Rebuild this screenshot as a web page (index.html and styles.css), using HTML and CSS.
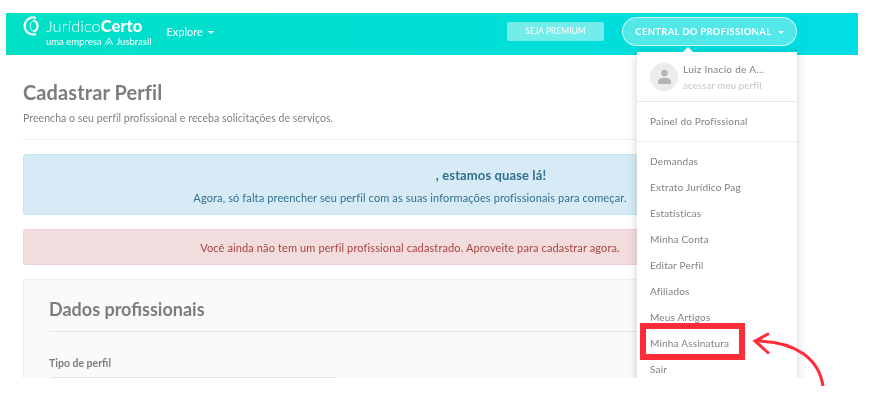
FILE: index.html
```html
<!DOCTYPE html>
<html lang="en">
<head>
    <meta charset="UTF-8">
    <meta name="viewport" content="width=device-width, initial-scale=1.0">
    <title>Cadastrar Perfil</title>
    <link rel="stylesheet" href="styles.css">
</head>
<body>
    <div class="app">
        <header class="topbar">
            <div class="brand">
                <svg class="brand-icon" width="19" height="20" viewBox="0 0 19 20">
                    <path d="M13 2A8.500 8.500 0 1 0 13 18" fill="none" stroke="#fff" stroke-width="2.200"/>
                    <path d="M10 4.500a5.600 5.600 0 0 1 0 11" fill="none" stroke="#fff" stroke-width="2.200"/>
                    <path d="M10 4.500a7 7 0 0 0 0 11" fill="none" stroke="#fff" stroke-width="0.800"/>
                </svg>
                <div class="brand-text">
                    <div class="brand-name">Jurídico<b>Certo</b></div>
                    <div class="brand-sub">uma empresa
                        <svg width="10" height="8" viewBox="0 0 10 8"><path d="M1 7.500 5 1l4 6.500M3 7.500 5 4.500l2 3" fill="none" stroke="#fff" stroke-width="0.900"/></svg>
                        Jusbrasil</div>
                </div>
            </div>
            <a class="explore" href="#">Explore <span class="caret"></span></a>
            <a class="premium" href="#">SEJA PREMIUM</a>
            <a class="central" href="#">CENTRAL DO PROFISSIONAL <span class="caret"></span></a>
        </header>

        <main class="content">
            <h1>Cadastrar Perfil</h1>
            <p class="lead">Preencha o seu perfil profissional e receba solicitações de serviços.</p>
            <hr class="rule">
            <div class="alert alert-info">
                <h4>, estamos quase lá!</h4>
                <p>Agora, só falta preencher seu perfil com as suas informações profissionais para começar.</p>
            </div>
            <div class="alert alert-danger">
                <p>Você ainda não tem um perfil profissional cadastrado. Aproveite para cadastrar agora.</p>
            </div>
            <section class="card">
                <h2>Dados profissionais</h2>
                <label class="field-label">Tipo de perfil</label>
                <div class="field"></div>
            </section>
        </main>

        <nav class="dropdown">
            <div class="profile">
                <span class="avatar">
                    <svg width="15" height="15" viewBox="0 0 15 15"><circle cx="7.500" cy="4" r="3.200" fill="#b5b5b5"/><path d="M1 15v-2.500C1 10 4.500 8.800 7.500 8.800S14 10 14 12.500V15z" fill="#b5b5b5"/></svg>
                </span>
                <div>
                    <div class="profile-name">Luiz Inacio de A...</div>
                    <div class="profile-link">acessar meu perfil</div>
                </div>
            </div>
            <a class="panel-link" href="#">Painel do Profissional</a>
            <ul class="menu">
                <li>Demandas</li>
                <li>Extrato Jurídico Pag</li>
                <li>Estatísticas</li>
                <li>Minha Conta</li>
                <li>Editar Perfil</li>
                <li>Afiliados</li>
                <li>Meus Artigos</li>
                <li>Minha Assinatura</li>
                <li>Sair</li>
            </ul>
        </nav>
    </div>

    <div class="highlight"></div>
    <svg class="pointer" width="80" height="60" viewBox="0 0 80 60">
        <path d="M72 56C68 30 46 11 5 11" fill="none" stroke="#ff2d3a" stroke-width="3"/>
        <path d="M18 3.500 4 11l14 12.500" fill="none" stroke="#ff2d3a" stroke-width="3"/>
    </svg>
</body>
</html>
```

FILE: styles.css
```css
* {
    margin: 0;
    padding: 0;
    box-sizing: border-box;
    font-family: Lato, "Open Sans", sans-serif;
}

body {
    background: white;
}

.app {
    position: relative;
    width: 852px;
    height: 365px;
    margin: 13px 0 0 6px;
    overflow: hidden;
    background: white;
    filter: blur(0.35px);
}

/* top bar */
.topbar {
    display: flex;
    align-items: center;
    height: 42px;
    padding: 0 61px 6px 17px;
    background: linear-gradient(90deg, #00e0c6, #00dde4);
    color: white;
}

.brand {
    display: flex;
    align-items: flex-start;
    gap: 4px;
    margin-top: 2px;
}

.brand-name {
    font-size: 16.500px;
    line-height: 21px;
    font-weight: 300;
}

.brand-name b {
    font-weight: 900;
}

.brand-sub {
    margin-top: -1px;
    font-size: 9.500px;
    line-height: 12px;
}

.caret {
    display: inline-block;
    width: 0;
    height: 0;
    margin-left: 2px;
    vertical-align: middle;
    border-top: 3px solid white;
    border-left: 3px solid transparent;
    border-right: 3px solid transparent;
}

.explore {
    margin-left: 15px;
    color: white;
    font-size: 11px;
    text-decoration: none;
}

.premium {
    width: 97px;
    height: 19px;
    margin-left: auto;
    border-radius: 2px;
    background: rgba(255,255,255,0.45);
    color: white;
    font-size: 8.500px;
    line-height: 19px;
    text-align: center;
    text-decoration: none;
}

.central {
    width: 175px;
    height: 29px;
    margin-left: 18px;
    border: 1px solid rgba(255,255,255,0.7);
    border-radius: 15px;
    background: rgba(255,255,255,0.32);
    color: white;
    font-size: 9.500px;
    font-weight: 700;
    letter-spacing: 0.3px;
    line-height: 27px;
    text-align: center;
    text-decoration: none;
}

.central .caret {
    margin-left: 4px;
}

/* page content */
.content {
    width: 791px;
    padding: 25px 0 0 17px;
}

h1 {
    font-size: 20px;
    line-height: 24px;
    letter-spacing: 0.1px;
    font-weight: 700;
    color: #7d7d7d;
}

.lead {
    margin-top: 7px;
    font-size: 10.500px;
    line-height: 14px;
    letter-spacing: 0.06px;
    color: #808080;
}

.rule {
    margin-top: 14px;
    border: 0;
    border-top: 1px solid #eee;
}

.alert {
    margin-top: 14px;
    border: 1px solid;
    border-radius: 3px;
    text-align: center;
    font-size: 11px;
    line-height: 15px;
    letter-spacing: 0.12px;
}

.alert-info {
    height: 61px;
    padding-top: 12px;
    background: #d6ebf6;
    border-color: #bde8f1;
    color: #31708f;
}

.alert-info h4 {
    padding-left: 162px;
    font-size: 13px;
    line-height: 16px;
    font-weight: 700;
}

.alert-info p {
    margin-top: 7px;
}

.alert-danger {
    height: 36px;
    padding-top: 10px;
    background: #f2dcde;
    border-color: #ecd0d4;
    color: #a94442;
}

.card {
    height: 200px;
    margin-top: 14px;
    padding: 18px 25px;
    background: #fafafa;
    border: 1px solid #eee;
    border-radius: 3px;
}

.card h2 {
    padding-bottom: 11px;
    border-bottom: 1px solid #e6e6e6;
    font-size: 18px;
    line-height: 22px;
    font-weight: 700;
    color: #7d7d7d;
}

.field-label {
    display: block;
    margin-top: 25px;
    font-size: 10.500px;
    line-height: 13px;
    font-weight: 700;
    color: #7d7d7d;
}

.field {
    width: 290px;
    height: 34px;
    margin-top: 7px;
    background: white;
    border: 1px solid #e6e6e6;
    border-radius: 3px;
}

/* dropdown menu */
.dropdown {
    position: absolute;
    left: 631px;
    top: 39px;
    width: 160px;
    height: 340px;
    background: white;
    box-shadow: 0 2px 10px rgba(0,0,0,0.18);
    color: #808080;
}

.dropdown::before {
    content: "";
    position: absolute;
    left: 46px;
    top: -5px;
    border-bottom: 5px solid white;
    border-left: 5px solid transparent;
    border-right: 5px solid transparent;
}

.profile {
    display: flex;
    align-items: center;
    gap: 5px;
    height: 50px;
    padding-left: 13px;
    border-bottom: 1px solid #e8e8e8;
}

.avatar {
    display: flex;
    align-items: center;
    justify-content: center;
    width: 28px;
    height: 28px;
    border-radius: 50%;
    background: #ececec;
}

.profile-name {
    font-size: 10px;
    line-height: 15px;
    letter-spacing: 0.3px;
}

.profile-link {
    margin-top: 2px;
    font-size: 9.500px;
    line-height: 13px;
    letter-spacing: 0.2px;
    color: #c4c4c4;
}

.panel-link {
    display: block;
    height: 40px;
    padding-left: 13px;
    border-bottom: 1px solid #eee;
    color: #808080;
    font-size: 10px;
    line-height: 39px;
    letter-spacing: 0.2px;
    text-decoration: none;
}

.menu {
    list-style: none;
    padding-top: 6px;
}

.menu li {
    height: 26px;
    padding-left: 13px;
    font-size: 10px;
    line-height: 26px;
    letter-spacing: 0.2px;
}

/* annotations drawn over the screenshot */
.highlight {
    position: absolute;
    left: 640px;
    top: 323px;
    width: 105px;
    height: 37px;
    border: 6px solid #ff2d3a;
}

.pointer {
    position: absolute;
    left: 751px;
    top: 330px;
}
```
